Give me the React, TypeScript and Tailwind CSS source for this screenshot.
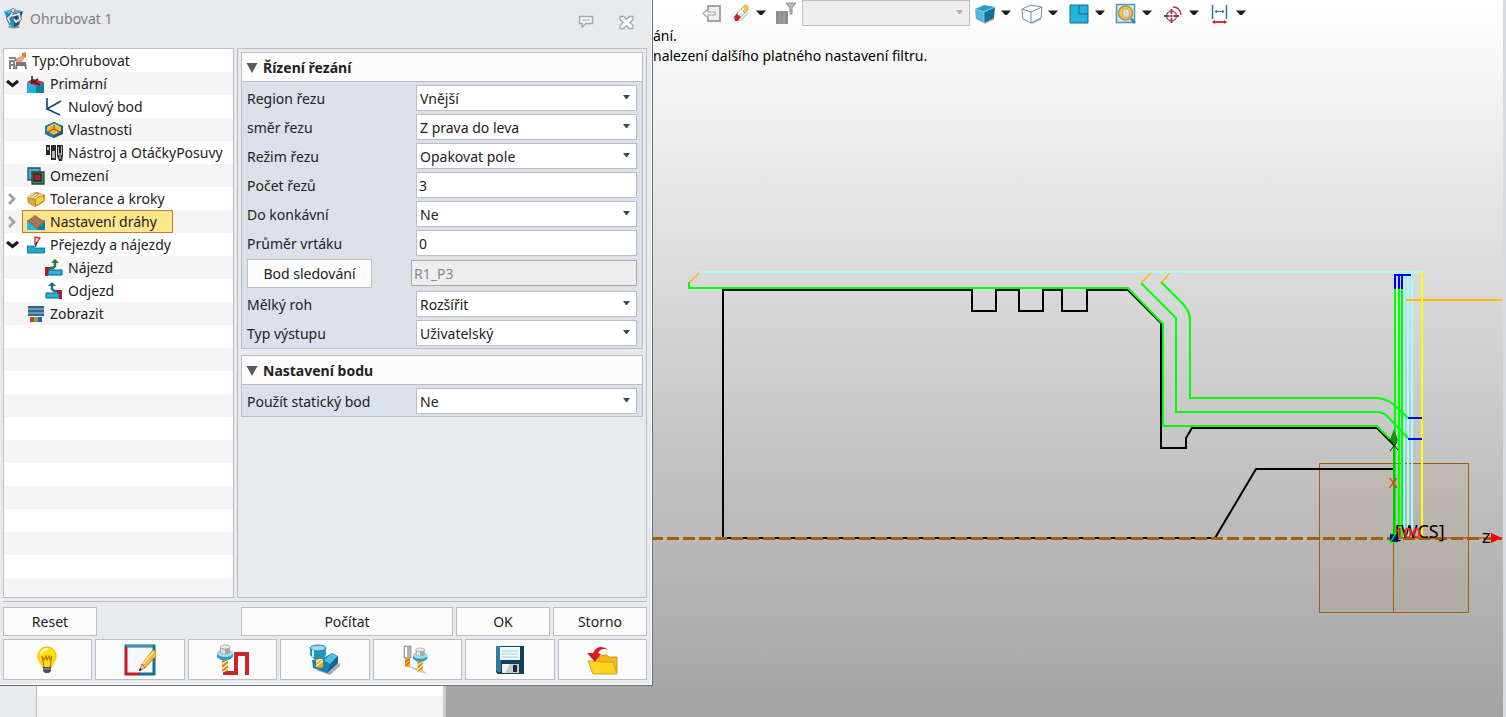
import React from 'react';
import clsx from 'clsx';

interface FieldProps {
  id: string;
  label: string;
  value: string;
}

interface TreeItem {
  label: string;
  level: number;
  icon: React.ReactNode;
  state?: 'open' | 'closed';
  selected?: boolean;
}

const Caret = () => (
  <svg className="h-[6px] w-[10px] shrink-0" viewBox="0 0 10 6">
    <path d="M0 0.5h10L6 5H4z" fill="#1c1c1c" />
  </svg>
);

/* Shared tool shape: holder with a spiral cutter */
const Mill = () => (
  <g>
    <path d="M5 15h6v11l-3 2-3-1z" fill="#f7a41d" />
    <path d="M5 20l6-4M5 25l6-5M6 28l5-4" stroke="#fff0b0" strokeWidth="1.2" />
    <path d="M5 18l5-2M5 23l6-5M5 27l6-4" stroke="#c4561b" strokeWidth="0.8" />
    <path d="M0 9q8-5 16 0v4l-4 3H4l-4-3z" fill="#2a9ccc" />
    <ellipse cx="8" cy="9" rx="8" ry="4" fill="#a7dcf0" />
    <path d="M3 3v6q5 3 10 0V3z" fill="#a3a8ad" />
    <path d="M5 4v5M7 4v6" stroke="#f5f5f5" strokeWidth="1.4" />
    <ellipse cx="8" cy="3" rx="5" ry="2" fill="#e9ebed" stroke="#888" strokeWidth="0.6" />
  </g>
);

const AppIcon = () => (
  <svg className="h-[21px] w-[20px]" viewBox="0 0 20 21">
    <ellipse cx="10" cy="19" rx="6" ry="1.5" fill="#8d9195" />
    <path d="M0 3l10 3v13l-5-2z" fill="#1198d8" />
    <path d="M19 3l-9 3v13l5-2z" fill="#0a4f86" />
    <path d="M0 3l9-2 10 2-9 3z" fill="#4cb9ea" />
    <path d="M9 2.500l-2 5-3 3 2 4M8 8l7-2 1 5-4 3-2-3" fill="none" stroke="#4c5966" strokeWidth="3.200" />
    <path d="M9 2.500l-2 5-3 3 2 4M8 8l7-2 1 5-4 3-2-3" fill="none" stroke="#e6ebef" strokeWidth="1.800" />
    <circle cx="9" cy="2.500" r="2" fill="#e6ebef" stroke="#4c5966" strokeWidth="0.700" />
  </svg>
);

const TypeIcon = () => (
  <svg className="size-[18px]" viewBox="0 0 18 18">
    <path d="M13 1l4-1v5l-4 2z" fill="#d5893b" />
    <path d="M6 7l6-3 4 1-3 5H7z" fill="#f3a07c" />
    <path d="M0 6h6l1 3M1 17V9h4v8M1 13h4" fill="none" stroke="#858585" strokeWidth="2" />
    <path d="M7 17l1-6h8l1 6M8 13h8" fill="none" stroke="#777777" strokeWidth="2" />
  </svg>
);

const PrimaryIcon = () => (
  <svg className="size-[18px]" viewBox="0 0 18 18">
    <path d="M0 7l9 4v7H0z" fill="#20b2db" />
    <path d="M9 11l8-4v11H9z" fill="#147ba5" />
    <path d="M0 7l6-3 11 3-8 4z" fill="#d3202d" />
    <path d="M5 1v7l6-4M5 7l8 3" fill="none" stroke="#3f2225" strokeWidth="1.6" />
  </svg>
);

const ZeroIcon = () => (
  <svg className="size-[18px]" viewBox="0 0 18 18">
    <path d="M2 0v11l14-8M2 11l13 6" fill="none" stroke="#17506e" strokeWidth="1.7" />
  </svg>
);

const PropsIcon = () => (
  <svg className="size-[18px]" viewBox="0 0 18 18">
    <path d="M0 5l9-4 9 4v8l-9 4-9-4z" fill="#125c86" />
    <path d="M0 5l9-4 9 4-9 3z" fill="#2387b3" />
    <path d="M0 5l9 4v8l-9-4z" fill="#1b7aa8" />
    <path d="M2 7l7-4 7 4v3l-7 4-7-4z" fill="#ffb41f" />
    <path d="M9 3v5l-6 3M9 8l6 3" fill="none" stroke="#9a5715" strokeWidth="1.2" />
    <path d="M2 7l7-4 7 4" fill="none" stroke="#ffe168" />
  </svg>
);

const ToolIcon = () => (
  <svg className="size-[18px]" viewBox="0 0 18 18">
    <path d="M1 1h4v10H1zM6 1h5v15H6zM12 1h6v10l-1 6h-3l-2-5z" fill="#292929" />
    <path d="M2 3h2v3H2zM7 7h3v7H7zM13 3h1v8h-1zM16 2h1v9h-1z" fill="#b9b9b9" />
    <path d="M14 9h2v6h-2z" fill="#828282" />
  </svg>
);

const LimitIcon = () => (
  <svg className="size-[18px]" viewBox="0 0 18 18">
    <path d="M1 1h12v12H1z" fill="#54aacd" stroke="#1d5374" strokeWidth="1.3" />
    <path d="M5 5h12v12H5z" fill="#3c8a72" stroke="#174b3c" strokeWidth="1.3" />
    <path d="M7 7h7v7H7z" fill="#c51722" stroke="#222222" strokeWidth="1.3" />
  </svg>
);

const ToleranceIcon = () => (
  <svg className="size-[18px]" viewBox="0 0 18 18">
    <path d="M0 7l5-4 5-1 8 3-1 7-9 5-7-4z" fill="#cd8b27" />
    <path d="M0 7l6-4 11 2-8 4z" fill="#f8e4a7" />
    <path d="M1 8l7 3v5l-6-3z" fill="#e0a93c" />
    <path d="M8 11q1-5 9-5v5l-8 5z" fill="#ffcf37" stroke="#a46518" strokeWidth="0.7" />
    <path d="M3 7l6-4M6 8l6-4" stroke="#b09466" />
  </svg>
);

const PathIcon = () => (
  <svg className="size-[18px]" viewBox="0 0 18 18">
    <path d="M0 7h18v10H0z" fill="#13a0d2" />
    <path d="M0 8l8-6 10 7-8 7z" fill="#9f6c4d" />
    <path d="M3 7l8 6M5 5l8 6M7 4l8 6" stroke="#c58a60" strokeWidth="0.8" />
    <path d="M0 8l10 8v1H0z" fill="#27b9e3" />
    <path d="M18 9l-8 7v1h8z" fill="#0e7cad" />
  </svg>
);

const LinkIcon = () => (
  <svg className="size-[18px]" viewBox="0 0 18 18">
    <path d="M0 10h7v2h11v5H0z" fill="#18acd5" stroke="#0f6587" strokeWidth="0.8" />
    <path d="M8 9V1l5 1-4 6" fill="#f7e5e5" stroke="#c92832" strokeWidth="1.3" />
    <path d="M8 11l2-5" stroke="#332" strokeWidth="1.4" />
  </svg>
);

const LeadInIcon = () => (
  <svg className="size-[18px]" viewBox="0 0 18 18">
    <path d="M0 8h5v3H3v6H0z" fill="#bd1823" />
    <path d="M3 11h14v5H3z" fill="#20b6de" stroke="#0d5d80" />
    <path d="M5 9h3l2-2V4" fill="none" stroke="#247345" strokeWidth="2.4" />
    <path d="M6 4l4-4 4 4z" fill="#247345" />
  </svg>
);

const LeadOutIcon = () => (
  <svg className="size-[18px]" viewBox="0 0 18 18">
    <path d="M12 8h5v9h-3v-6h-2z" fill="#bd1823" />
    <path d="M1 11h13v5H1z" fill="#20b6de" stroke="#0d5d80" />
    <path d="M12 9H9L7 7V4" fill="none" stroke="#176b97" strokeWidth="2.4" />
    <path d="M3 4l4-4 4 4z" fill="#176b97" />
  </svg>
);

const ShowIcon = () => (
  <svg className="size-[18px]" viewBox="0 0 18 18">
    <path d="M1 1h16v10H1z" fill="#2a6a8a" />
    <path d="M1 4h16M1 8h16" stroke="#a4cbdb" />
    <path d="M3 12h4v5H3z" fill="#e33232" />
    <path d="M7 12h4v5H7z" fill="#6db72b" />
    <path d="M11 12h4v5h-4z" fill="#3158d0" />
  </svg>
);

const treeItems: TreeItem[] = [
  { label: 'Primární', level: 1, icon: <PrimaryIcon />, state: 'open' },
  { label: 'Nulový bod', level: 2, icon: <ZeroIcon /> },
  { label: 'Vlastnosti', level: 2, icon: <PropsIcon /> },
  { label: 'Nástroj a OtáčkyPosuvy', level: 2, icon: <ToolIcon /> },
  { label: 'Omezení', level: 1, icon: <LimitIcon /> },
  { label: 'Tolerance a kroky', level: 1, icon: <ToleranceIcon />, state: 'closed' },
  { label: 'Nastavení dráhy', level: 1, icon: <PathIcon />, state: 'closed', selected: true },
  { label: 'Přejezdy a nájezdy', level: 1, icon: <LinkIcon />, state: 'open' },
  { label: 'Nájezd', level: 2, icon: <LeadInIcon /> },
  { label: 'Odjezd', level: 2, icon: <LeadOutIcon /> },
  { label: 'Zobrazit', level: 1, icon: <ShowIcon /> },
];

const TreeRow = ({ item }: { item: TreeItem }) => (
  <li className="flex h-[23px] items-center">
    <span className={clsx('flex shrink-0 pl-[2px]', item.level === 1 ? 'w-[18px]' : 'w-[36px]')}>
      {item.state === 'open' && (
        <svg className="h-[9px] w-[13px]" viewBox="0 0 13 9">
          <path d="M1 2l5.500 4.500L12 2" fill="none" stroke="#1d1d1d" strokeWidth="3.2" />
        </svg>
      )}
      {item.state === 'closed' && (
        <svg className="h-[12px] w-[12px]" viewBox="0 0 12 12">
          <path d="M3 1l5 5-5 5" fill="none" stroke="#a3a3a3" strokeWidth="2.8" />
        </svg>
      )}
    </span>
    <button
      className={clsx(
        'flex h-[23px] items-center gap-[5px] border pr-[15px] pl-[4px] whitespace-nowrap',
        item.selected ? 'border-[#c27c33] bg-[#ffe48a]' : 'border-transparent',
      )}
    >
      {item.icon}
      {item.label}
    </button>
  </li>
);

const SelectField = ({ id, label, value }: FieldProps) => (
  <div className="flex items-center">
    <label htmlFor={id} className="w-[169px] shrink-0 pt-px">{label}</label>
    <div className="relative flex-1">
      <select id={id} className="block h-[26px] w-full appearance-none border border-[#b8bdc6] bg-white px-[3px] pt-px outline-none">
        <option>{value}</option>
      </select>
      <svg className="pointer-events-none absolute top-[10px] right-[7px] h-[4px] w-[7px]" viewBox="0 0 7 4">
        <path d="M0 0h7L4 4H3z" fill="#42474e" />
      </svg>
    </div>
  </div>
);

const TextField = ({ id, label, value }: FieldProps) => (
  <div className="flex items-center">
    <label htmlFor={id} className="w-[169px] shrink-0 pt-px">{label}</label>
    <input id={id} defaultValue={value} className="h-[26px] min-w-0 flex-1 border border-[#b8bdc6] bg-white px-[2px] outline-none" />
  </div>
);

const Section = ({ title, children }: { title: string; children: React.ReactNode }) => (
  <section className="border border-[#b8bdc6] bg-[#dce0e8]">
    <h2 className="flex h-[29px] items-center gap-[5px] border-b border-[#b8bdc6] bg-[#fcfcfc] pt-px pl-1 font-bold">
      <svg className="h-[10px] w-[12px]" viewBox="0 0 12 10">
        <path d="M0.500 0h11L6 10z" fill="#555b64" />
      </svg>
      {title}
    </h2>
    <div className="flex flex-col gap-[3px] px-[5px] pt-[3px] pb-[2px]">{children}</div>
  </section>
);

const BulbIcon = () => (
  <svg className="size-8" viewBox="0 0 32 32">
    <circle cx="15" cy="13" r="11" fill="#fff36b" opacity="0.5" />
    <path d="M15 3a9 9 0 0 0-9 9c0 4 3 6 5 12h8c2-6 5-8 5-12a9 9 0 0 0-9-9z" fill="#ffdf18" stroke="#e8b70c" />
    <path d="M9 10q2-5 7-5" fill="none" stroke="#fffbd0" strokeWidth="2" />
    <path d="M12 23l-2-11 2 4 2-4 1 4 2-4 1 4 2-4-2 11" fill="none" stroke="#c37a0c" strokeWidth="1.2" />
    <path d="M11 23h8v4l-2 2h-4l-2-2z" fill="#494e52" />
    <path d="M11 25h8" stroke="#a1a6a9" />
  </svg>
);

const EditIcon = () => (
  <svg className="size-8" viewBox="0 0 32 32">
    <path d="M2 2h28v28H2z" fill="#f8f8fa" />
    <path d="M2 3v27h14" fill="none" stroke="#c71928" strokeWidth="3" />
    <path d="M0.500 2H30v28H15" fill="none" stroke="#176f94" strokeWidth="3" />
    <path d="M2 2h27" stroke="#5eb4d3" />
    <path d="M18 20L29 6l3 1v5L21 24z" fill="#f6b931" stroke="#a56a17" strokeWidth="0.7" />
    <path d="M19 20L30 7" stroke="#ffe78a" strokeWidth="1.5" />
    <path d="M18 20l3 4-6 3z" fill="#e8c79c" stroke="#775430" strokeWidth="0.6" />
    <path d="M15 27l1-3 2 2z" fill="#222" />
  </svg>
);

const ToolPathIcon = () => (
  <svg className="size-8" viewBox="0 0 32 32">
    <path d="M8 24v5h11V10h11v21" fill="none" stroke="#d22029" strokeWidth="4" />
    <Mill />
  </svg>
);

const MachineIcon = () => (
  <svg className="size-8" viewBox="0 0 32 32">
    <path d="M7 26l14 5 10-9v-3z" fill="#aaaaaa" />
    <path d="M3 16l13-3 7-4 6 3v7L18 29 4 24z" fill="#1684b2" />
    <path d="M15 16l8-7 6 3-8 8z" fill="#54bce0" />
    <path d="M21 20l8-8v7L18 29z" fill="#0e6794" />
    <path d="M7 14h7v9l-3 1-4-1z" fill="#f7a41d" />
    <path d="M7 18l7-4M7 22l7-5" stroke="#fff0b0" strokeWidth="1.5" />
    <path d="M1 4v7l4 4h9l3-4V4z" fill="#2492bf" />
    <ellipse cx="9" cy="4" rx="8" ry="3" fill="#9ddaf0" stroke="#297b9d" />
    <path d="M4 6v7" stroke="#c8eef9" strokeWidth="2" />
  </svg>
);

const ToolsIcon = () => (
  <svg className="size-8" viewBox="0 0 32 32">
    <path d="M6 22l10 5v-3zM18 28l8 2-3-3z" fill="#c5c5c5" />
    <path d="M3 2h7v12H3z" fill="#b1b5ba" stroke="#777" strokeWidth="0.6" />
    <path d="M5 3v10" stroke="#fff" strokeWidth="2" />
    <path d="M4 14h5v9H4z" fill="#f7a41d" />
    <path d="M4 18l5-3M4 22l5-4" stroke="#c4561b" />
    <g transform="translate(12 3) scale(0.900)"><Mill /></g>
  </svg>
);

const SaveIcon = () => (
  <svg className="size-8" viewBox="0 0 32 32">
    <path d="M2 2h28v28H4l-2-2z" fill="#123f5b" />
    <path d="M2 2h5v26H4l-2-2z" fill="#317da1" />
    <path d="M6 3h20v13H6z" fill="#eef9fd" />
    <path d="M8 7h16M8 10h16M8 13h16" stroke="#9bd0e5" />
    <path d="M8 20h17v9H8z" fill="#c7cbce" />
    <path d="M8 20h8l-5 9H8z" fill="#f3f3f3" />
    <path d="M19 21h4v7h-4z" fill="#172c3b" />
  </svg>
);

const OpenIcon = () => (
  <svg className="size-8" viewBox="0 0 32 32">
    <path d="M13 13l3-2h5l2 2h8v16H8z" fill="#f1b719" stroke="#c88a12" strokeWidth="0.8" />
    <path d="M2 17h10l3 1h12l4 12H7z" fill="#ffd51f" stroke="#cf9415" strokeWidth="0.8" />
    <path d="M23 6Q12-1 7 9L1 9l8 9 6-8-3-1Q15 3 23 6z" fill="#d51d27" />
  </svg>
);

const footerActions = [
  { label: 'Nápověda', icon: <BulbIcon /> },
  { label: 'Upravit', icon: <EditIcon /> },
  { label: 'Dráha nástroje', icon: <ToolPathIcon /> },
  { label: 'Simulace', icon: <MachineIcon /> },
  { label: 'Nástroje', icon: <ToolsIcon /> },
  { label: 'Uložit', icon: <SaveIcon /> },
  { label: 'Otevřít', icon: <OpenIcon /> },
];

const buttonStyle = 'flex items-center justify-center border border-[#b8bdc6] bg-[#fcfcfc]';

const OperationDialog = () => (
  <div role="dialog" aria-label="Ohrubovat 1" className="flex h-[686px] flex-col border-r border-b border-[#68727c] bg-[#e8eaec]">
    <div className="flex flex-1 flex-col border-r border-b border-white pr-[4px] pb-[4px] pl-[3px]">
      <header className="flex h-[48px] items-start pt-[8px] pl-px">
        <AppIcon />
        <h1 className="flex-1 pl-[6px] leading-[21px] text-[#808080]">Ohrubovat 1</h1>
        <button aria-label="Komentář" className="mt-[7px]">
          <svg className="h-[14px] w-[16px]" viewBox="0 0 16 14">
            <path d="M1.500 1.500h13v7H8l-4 3.500V8.500H1.500z" fill="#f7f7f7" stroke="#a5a9ad" strokeWidth="1.500" />
            <path d="M4 5h8" stroke="#a5a9ad" />
          </svg>
        </button>
        <button aria-label="Zavřít" className="mt-[7px] mr-[13px] ml-[25px]">
          <svg className="size-[15px]" viewBox="0 0 15 15">
            <path d="M1 1.500h4l2.500 3 2.500-3h4v3l-3 3 3 3v3h-4l-2.500-3-2.500 3H1v-3l3-3-3-3z" fill="#fafafa" stroke="#a5a9ad" strokeWidth="1.300" />
          </svg>
        </button>
      </header>

      <main className="flex flex-1 gap-[3px]">
        <nav className="w-[231px] shrink-0 border border-[#b8bdc6] bg-[repeating-linear-gradient(#ffffff_0px,#ffffff_23px,#f5f5f5_23px,#f5f5f5_46px)]">
          <ul>
            <li className="flex h-[23px] items-center">
              <button className="flex items-center gap-[5px] pl-[5px]">
                <TypeIcon />
                Typ:Ohrubovat
              </button>
            </li>
            {treeItems.map((item) => (
              <TreeRow key={item.label} item={item} />
            ))}
          </ul>
        </nav>

        <div className="flex flex-1 flex-col gap-[6px] border border-[#b8bdc6] p-[3px]">
          <Section title="Řízení řezání">
            <SelectField id="region" label="Region řezu" value="Vnější" />
            <SelectField id="direction" label="směr řezu" value="Z prava do leva" />
            <SelectField id="mode" label="Režim řezu" value="Opakovat pole" />
            <TextField id="count" label="Počet řezů" value="3" />
            <SelectField id="concave" label="Do konkávní" value="Ne" />
            <TextField id="drill" label="Průměr vrtáku" value="0" />
            <div className="flex items-start justify-between">
              <button id="track" className={clsx(buttonStyle, 'h-[29px] w-[125px] pt-px')}>Bod sledování</button>
              <input aria-labelledby="track" disabled defaultValue="R1_P3" className="mt-px h-[26px] w-[226px] border border-[#a9a9a9] bg-[#eeeeee] px-[2px] text-[#888888]" />
            </div>
            <SelectField id="corner" label="Mělký roh" value="Rozšířit" />
            <SelectField id="output" label="Typ výstupu" value="Uživatelský" />
          </Section>
          <Section title="Nastavení bodu">
            <SelectField id="static" label="Použít statický bod" value="Ne" />
          </Section>
        </div>
      </main>

      <footer className="mt-[3px] flex flex-col gap-[3px] border-t border-[#b8bdc6] pt-[5px]">
        <div className="flex gap-[3px]">
          <button className={clsx(buttonStyle, 'mr-auto h-[29px] w-[94px] pt-px')}>Reset</button>
          <button className={clsx(buttonStyle, 'h-[29px] w-[212px] pt-px')}>Počítat</button>
          <button className={clsx(buttonStyle, 'h-[29px] w-[94px] pt-px')}>OK</button>
          <button className={clsx(buttonStyle, 'h-[29px] w-[94px] pt-px')}>Storno</button>
        </div>
        <div className="grid grid-cols-7 gap-[3px]">
          {footerActions.map((action) => (
            <button key={action.label} aria-label={action.label} className={clsx(buttonStyle, 'h-[41px]')}>
              {action.icon}
            </button>
          ))}
        </div>
      </footer>
    </div>
  </div>
);

const ShadedIcon = () => (
  <svg className="size-[22px]" viewBox="0 0 22 22">
    <path d="M3 17l8 5 9-4v-3z" fill="#bbb" />
    <path d="M1 7l9 3v11l-8-4z" fill="#5bb5d8" />
    <path d="M10 10l11-5-1 11-10 5z" fill="#126e9b" />
    <path d="M1 7l9-4 11 2-11 5z" fill="#20a3cb" />
    <path d="M1 7l9 3 11-5M10 10v11" fill="none" stroke="#9be3f4" strokeWidth="0.7" />
  </svg>
);

const WireIcon = () => (
  <svg className="size-[22px]" viewBox="0 0 22 22">
    <path d="M3 17l8 5 9-4v-3z" fill="#bbb" />
    <path d="M1 7l9-4 11 2-1 11-10 5-8-4z" fill="#fcfdfe" stroke="#7290a2" />
    <path d="M1 7l9 3 11-5M10 10v11" fill="none" stroke="#7290a2" />
  </svg>
);

const LayoutIcon = () => (
  <svg className="size-[22px]" viewBox="0 0 22 22">
    <path d="M2 3h18v18H2z" fill="#20b4df" stroke="#176b8a" />
    <path d="M11 3v9h9" fill="none" stroke="#176b8a" />
  </svg>
);

const ZoomIcon = () => (
  <svg className="size-[22px]" viewBox="0 0 22 22">
    <path d="M1.500 2.500h18v18h-18z" fill="#d5edf7" stroke="#4a97b7" strokeWidth="1.500" />
    <circle cx="10.500" cy="11" r="7" fill="#ffc51f" stroke="#a8935a" strokeWidth="1.500" />
    <path d="M8 7h4l2 2v6H8z" fill="#f5f5f5" stroke="#a7a7a7" />
    <path d="M9.500 9h2M9.500 11h3M9.500 13h3" stroke="#999" strokeWidth="0.800" />
    <path d="M16 17l4 4" stroke="#3a86a8" strokeWidth="2.500" />
  </svg>
);

const TargetIcon = () => (
  <svg className="size-[22px]" viewBox="0 0 22 22">
    <circle cx="9.500" cy="14" r="5" fill="none" stroke="#3989ac" strokeWidth="1.500" />
    <path d="M2 14h5.500M11.500 14H17M9.500 7v5M9.500 16v5" stroke="#d41f2b" strokeWidth="1.800" />
    <circle cx="9.500" cy="14" r="1.200" fill="#d41f2b" />
    <path d="M11 5q7 0 8 8" fill="none" stroke="#d41f2b" strokeWidth="1.300" />
  </svg>
);

const MeasureIcon = () => (
  <svg className="size-[22px]" viewBox="0 0 22 22">
    <path d="M3.500 3v14M17.500 3v14" stroke="#277a9d" strokeWidth="1.500" />
    <path d="M6 9.500h9M8 8l-2 1.500L8 11M13 8l2 1.500L13 11" fill="none" stroke="#277a9d" />
    <path d="M4 20h13" stroke="#c91f29" strokeWidth="1.800" />
    <path d="M3 20l3-2v4zM18 20l-3-2v4z" fill="#c91f29" />
  </svg>
);

const viewTools = [
  { label: 'Stínování', icon: <ShadedIcon /> },
  { label: 'Drátový model', icon: <WireIcon /> },
  { label: 'Rozložení', icon: <LayoutIcon /> },
  { label: 'Přiblížení', icon: <ZoomIcon /> },
  { label: 'Střed', icon: <TargetIcon /> },
  { label: 'Měření', icon: <MeasureIcon /> },
];

const ViewToolbar = () => (
  <div className="flex h-[26px] items-center pl-[49px]">
    <button aria-label="Zpět" className="mr-[12px]">
      <svg className="size-[20px]" viewBox="0 0 20 20">
        <path d="M6 6V3h12v15H6v-3" fill="#f0f0f0" stroke="#a3a5a7" strokeWidth="2" />
        <path d="M1 10.500L6 6v3h7v3H6v3z" fill="#fafafa" stroke="#a3a5a7" strokeWidth="1.200" />
      </svg>
    </button>
    <button aria-label="Guma" className="mr-[9px] flex items-center gap-[6px]">
      <svg className="h-[18px] w-[16px]" viewBox="0 0 16 18">
        <path d="M5 17l9-9v2l-7 7z" fill="#c9c9c9" />
        <path d="M0 13l3-4 4 4-3 4H1z" fill="#d3202d" />
        <path d="M3 9l4-4 4 4-4 4z" fill="#e6e7e9" stroke="#8f8f8f" strokeWidth="0.600" />
        <path d="M7 5l4-4 3 1v4l-3 3z" fill="#f0c83c" stroke="#ae8924" strokeWidth="0.600" />
        <path d="M4 11l6-7" stroke="#ffffff" strokeWidth="1.200" />
      </svg>
      <Caret />
    </button>
    <button aria-label="Filtr">
      <svg className="h-[22px] w-[22px]" viewBox="0 0 22 22">
        <path d="M1 9h12v13H1z" fill="#8c8e90" />
        <path d="M5 9v13M9 9v13" stroke="#a8aaac" />
        <path d="M11 1h10l-4 5v6h-2V6z" fill="#b7b9bb" stroke="#8c8e90" />
      </svg>
    </button>
    <div className="relative ml-[5px] self-stretch">
      <select aria-label="Filtr výběru" disabled className="block h-full w-[168px] appearance-none border border-[#b8bdc6] bg-[#eeeeee]">
        <option></option>
      </select>
      <svg className="pointer-events-none absolute top-[10px] right-[7px] h-[4px] w-[7px]" viewBox="0 0 7 4">
        <path d="M0 0h7L4 4H3z" fill="#acafb2" />
      </svg>
    </div>
    <div className="ml-[4px] flex">
      {viewTools.map((tool) => (
        <button key={tool.label} aria-label={tool.label} className="flex w-[47px] items-center gap-[5px]">
          {tool.icon}
          <Caret />
        </button>
      ))}
    </div>
  </div>
);

const Drawing = () => (
  <svg className="min-h-0 w-full flex-1" viewBox="653 66 850 651" fill="none" strokeWidth="2">
    {/* Clamping plane */}
    <rect x="1319.500" y="463.500" width="149" height="149" fill="#a06414" fillOpacity="0.08" stroke="#a45f00" strokeWidth="1" />
    <path d="M1393.500 463v149" stroke="#a45f00" strokeWidth="1" />

    {/* Part contour */}
    <path
      stroke="#000000"
      d="M1215 538H723V290H972V311H996V290H1019V311H1043V290H1062V311H1087V290H1128L1161 323V448H1186V438L1192 428H1377L1394 445M1215 538L1256 469H1394"
    />

    {/* Rapid moves and approach */}
    <path stroke="#a0ffff" d="M699 272H1422" />
    <path stroke="#a0ffff" d="M1404 275V538M1408 275V538M1412 275V538" />
    <path stroke="#ffb900" d="M1406 300H1502" />
    <path stroke="#ffb900" strokeWidth="1.500" d="M689 283L699 273M1141 283L1151 273M1161 283L1170 273" />
    <path stroke="#ffff00" d="M1422 272V538" />

    {/* Cutting passes */}
    <path stroke="#00ff00" d="M689 282V288H1128L1163 324V426H1377L1394 443" />
    <path stroke="#00ff00" d="M1141 283L1176 318V412H1377Q1383 412 1387 416L1408 438" />
    <path stroke="#00ff00" d="M1161 282L1183 304Q1190 312 1190 320V398H1377Q1387 399 1393 404L1408 418" />
    <path stroke="#00ff00" d="M1395 288V538M1399 288V538M1402 288V538" />
    <path stroke="#0000ff" d="M1395 289V275H1411M1399 275V289M1402 275V289M1408 418H1422M1408 439H1422" />

    {/* Axes */}
    <path stroke="#ff0000" d="M1394 538H1490" strokeWidth="1" />
    <path stroke="#a45f00" strokeWidth="3" strokeDasharray="12 4" strokeDashoffset="2" d="M653 538.500H1502" />
    <path fill="#ff0000" d="M1491 533l11 5-11 5z" />
    <path fill="#119311" d="M1394 429l4 11-2 3h-5l-1-3z" />
    <path stroke="#00c800" d="M1394 443V538" />
    <path stroke="#111111" strokeWidth="1" d="M1389 439l9 11M1397 442l-7 9" />
    <rect x="1390" y="534" width="8" height="8" fill="#0000aa" />
    <g strokeWidth="0" className="font-['Noto_Sans',sans-serif]">
      <text x="1395" y="538" fontSize="18" fill="#000000">[WCS]</text>
      <text x="1395" y="538" fontSize="15" fontWeight="600" fill="#ff2222">100</text>
      <text x="1389" y="488" fontSize="15" fill="#ff2222">X</text>
      <text x="1389" y="543" fontSize="14" fill="#00ff00">Z</text>
      <text x="1482" y="543" fontSize="15" fill="#000000">Z</text>
    </g>
  </svg>
);

const App: React.FC = () => (
  <div className="flex min-h-screen bg-linear-to-b from-white to-[#a3a3a3] font-['Noto_Sans','Open_Sans',sans-serif] text-[14px] leading-[20px] text-[#222222]">
    <div className="flex w-[653px] shrink-0 flex-col">
      <OperationDialog />
      <div className="flex w-[446px] flex-1 border-r-3 border-[#c9ced5] bg-[#e8eaec]">
        <div className="ml-[36px] flex flex-1 flex-col border-l border-[#b8bdc6] bg-[#f5f5f5]">
          <div className="h-[10px] bg-white" />
        </div>
      </div>
    </div>
    <div className="flex min-w-0 flex-1 flex-col border-r-3 border-[#d5dbe2]">
      <ViewToolbar />
      <div className="text-black">
        <p>ání.</p>
        <p>nalezení dalšího platného nastavení filtru.</p>
      </div>
      <Drawing />
    </div>
  </div>
);

export default App;
